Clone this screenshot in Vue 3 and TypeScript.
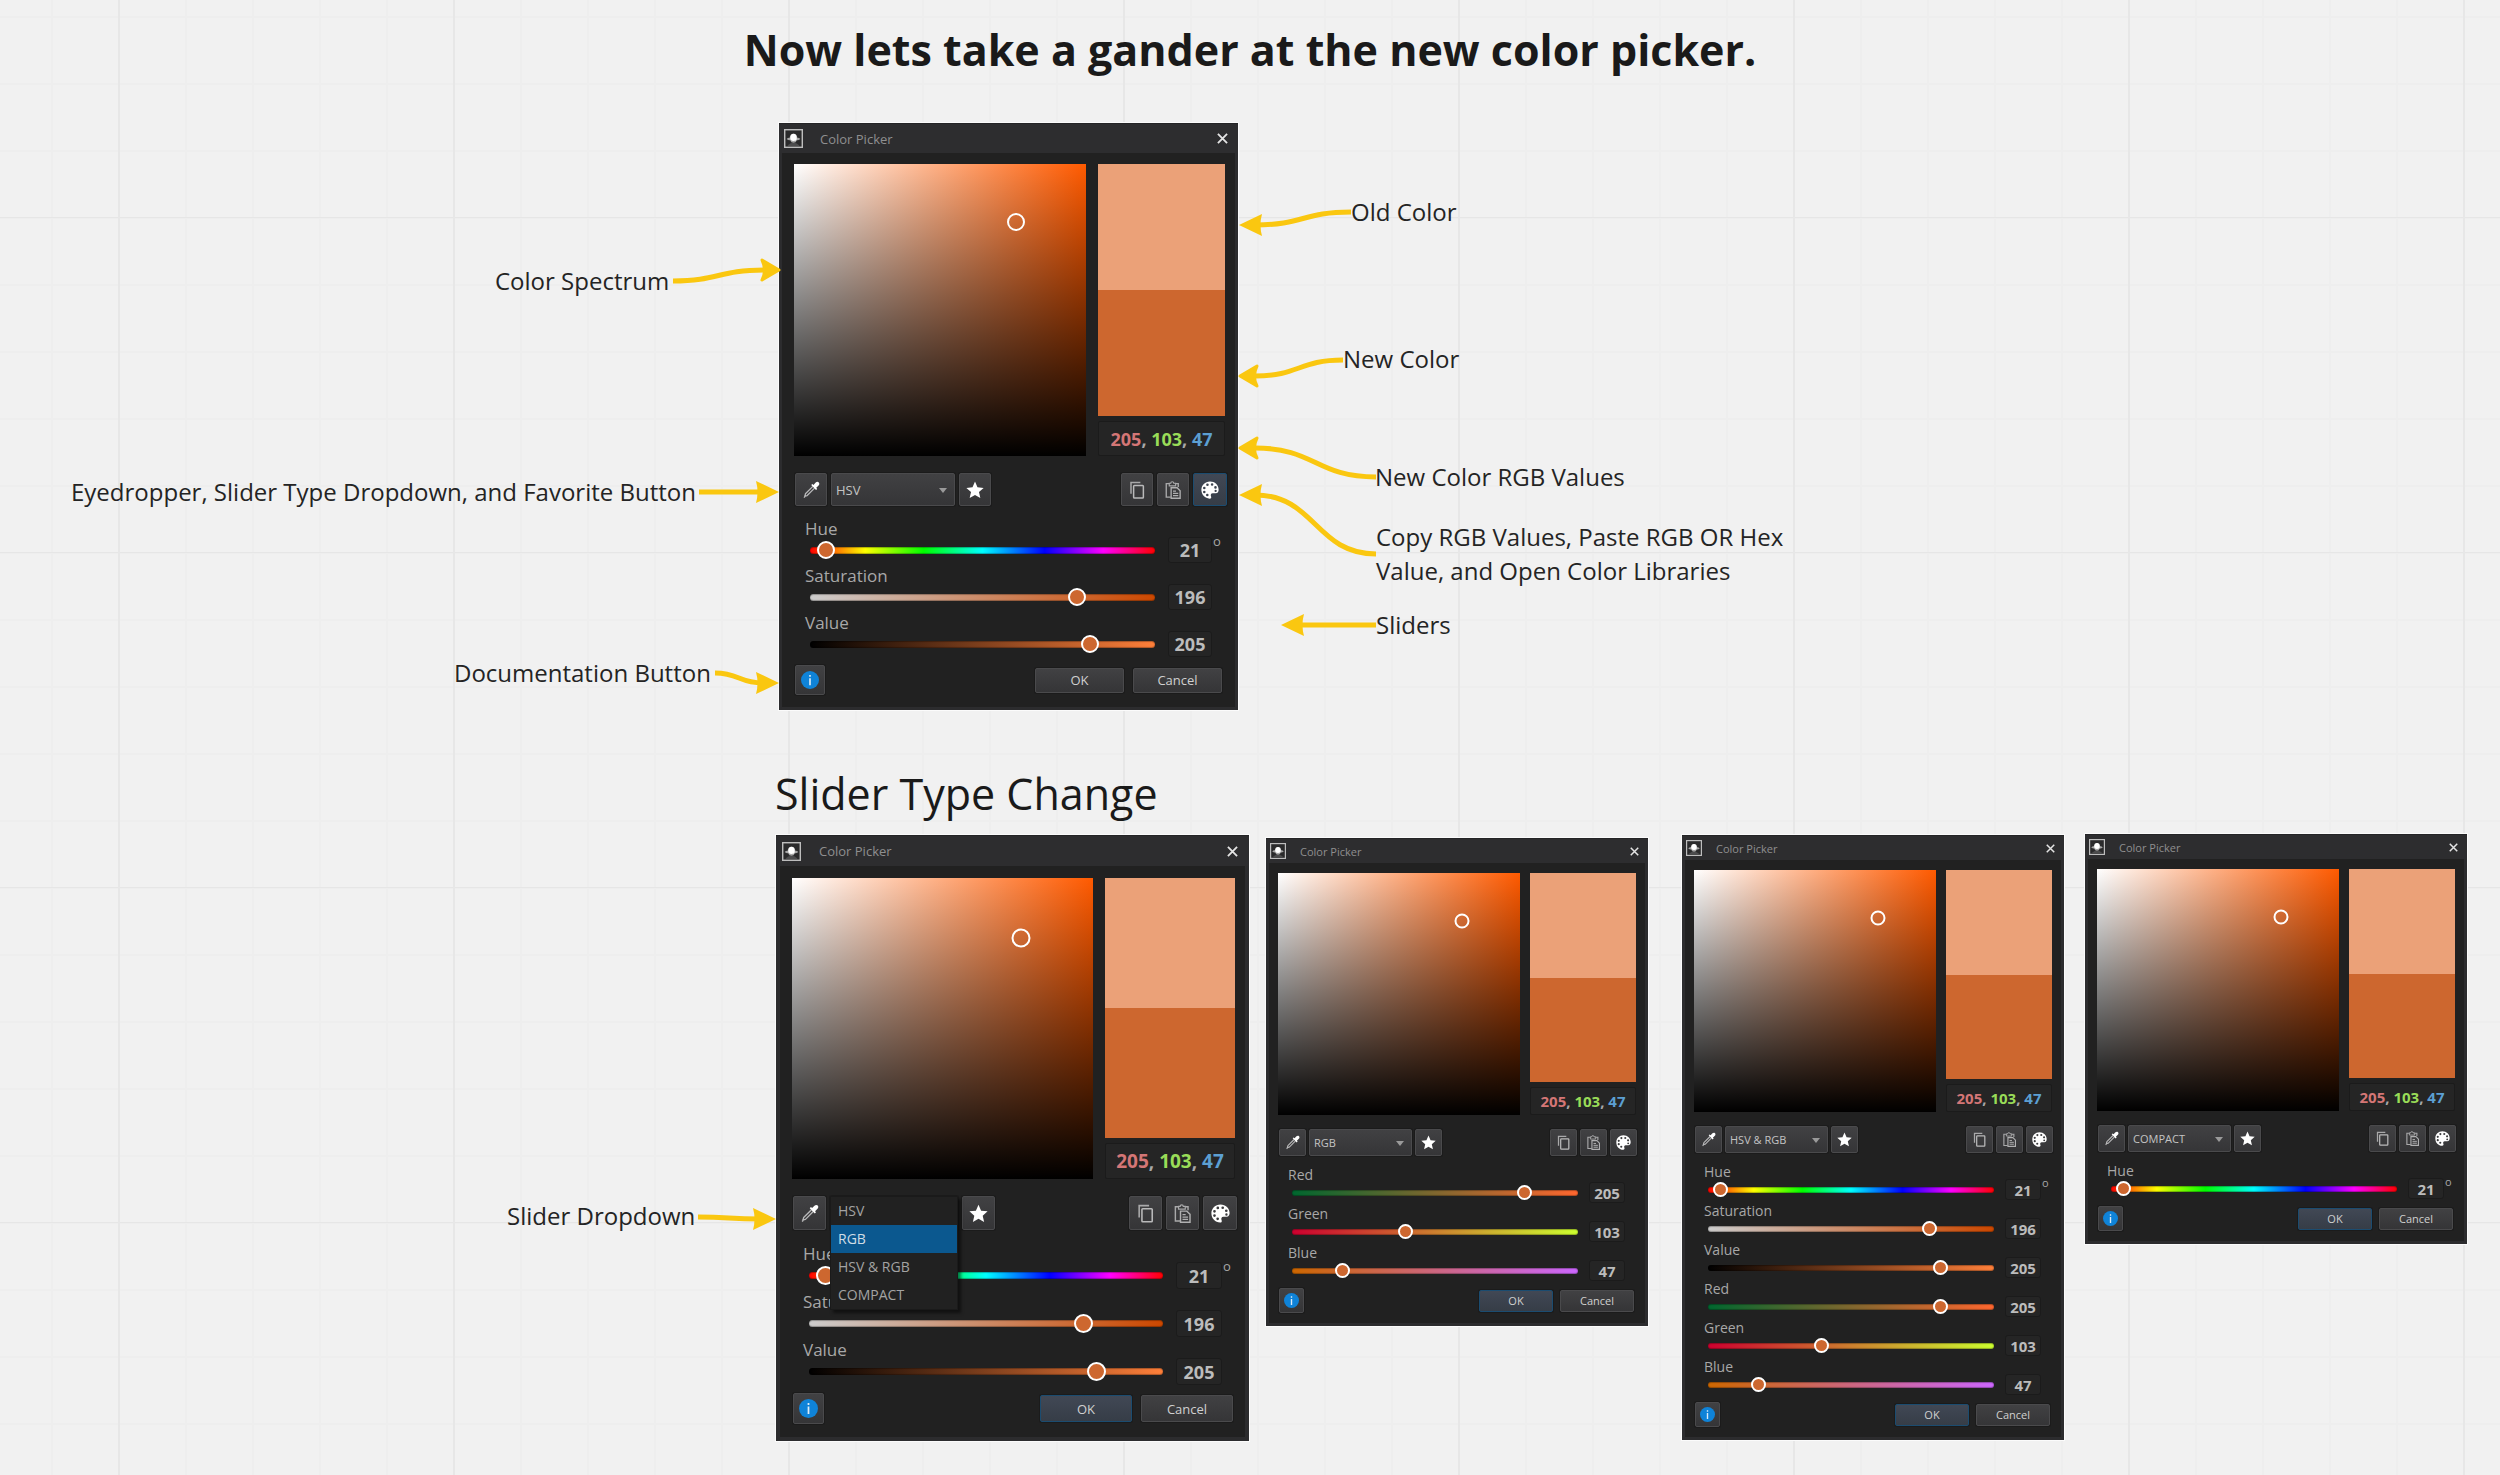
<script setup lang="ts">
type SliderKey = 'hue' | 'saturation' | 'value' | 'red' | 'green' | 'blue'

interface Slider {
  key: SliderKey
  label: string
  amount: number
  position: number
}

interface Picker {
  id: string
  size: 'medium' | 'large' | 'small'
  mode: string
  sliders: Slider[]
  focus: 'palette' | 'ok'
  menuOpen: boolean
}

interface Note {
  id: string
  lines: string[]
}

interface Arrow {
  from: [number, number]
  to: [number, number]
  head: 'sharp' | 'round'
}

const modes: string[] = ['HSV', 'RGB', 'HSV & RGB', 'COMPACT']

// position is the thumb's place along its track, in percent
const hue: Slider = { key: 'hue', label: 'Hue', amount: 21, position: 2 }
const hsv: Slider[] = [
  hue,
  { key: 'saturation', label: 'Saturation', amount: 196, position: 79 },
  { key: 'value', label: 'Value', amount: 205, position: 83 },
]
const rgb: Slider[] = [
  { key: 'red', label: 'Red', amount: 205, position: 83 },
  { key: 'green', label: 'Green', amount: 103, position: 39 },
  { key: 'blue', label: 'Blue', amount: 47, position: 16 },
]

const pickers: Picker[] = [
  { id: 'overview', size: 'medium', mode: 'HSV', sliders: hsv, focus: 'palette', menuOpen: false },
  { id: 'menu', size: 'large', mode: 'HSV', sliders: hsv, focus: 'ok', menuOpen: true },
  { id: 'rgb', size: 'small', mode: 'RGB', sliders: rgb, focus: 'ok', menuOpen: false },
  { id: 'both', size: 'small', mode: 'HSV & RGB', sliders: [...hsv, ...rgb], focus: 'ok', menuOpen: false },
  { id: 'compact', size: 'small', mode: 'COMPACT', sliders: [hue], focus: 'ok', menuOpen: false },
]

const notes: Note[] = [
  { id: 'spectrum', lines: ['Color Spectrum'] },
  { id: 'tools', lines: ['Eyedropper, Slider Type Dropdown, and Favorite Button'] },
  { id: 'docs', lines: ['Documentation Button'] },
  { id: 'old', lines: ['Old Color'] },
  { id: 'new', lines: ['New Color'] },
  { id: 'values', lines: ['New Color RGB Values'] },
  { id: 'clipboard', lines: ['Copy RGB Values, Paste RGB OR Hex', 'Value, and Open Color Libraries'] },
  { id: 'sliders', lines: ['Sliders'] },
  { id: 'dropdown', lines: ['Slider Dropdown'] },
]

const arrows: Arrow[] = [
  { from: [673, 281], to: [780, 270], head: 'round' },
  { from: [699, 492], to: [779, 492], head: 'sharp' },
  { from: [715, 673], to: [779, 683], head: 'sharp' },
  { from: [1351, 212], to: [1239, 225], head: 'sharp' },
  { from: [1343, 360], to: [1239, 376], head: 'round' },
  { from: [1376, 477], to: [1239, 448], head: 'round' },
  { from: [1376, 554], to: [1239, 495], head: 'sharp' },
  { from: [1376, 625], to: [1281, 625], head: 'sharp' },
  { from: [698, 1217], to: [776, 1219], head: 'sharp' },
]

function side(a: Arrow): number {
  return a.to[0] > a.from[0] ? 1 : -1
}

function shaft(a: Arrow): string {
  const s = side(a)
  const end = a.to[0] - s * 16
  const mid = (a.from[0] + end) / 2
  return `M${a.from[0]} ${a.from[1]}C${mid} ${a.from[1]} ${mid} ${a.to[1]} ${end} ${a.to[1]}`
}

function head(a: Arrow): string {
  const [x, y] = a.to
  const s = side(a)
  if (a.head === 'sharp') {
    return `M${x} ${y}L${x - s * 23} ${y - 11}Q${x - s * 20} ${y} ${x - s * 23} ${y + 11}Z`
  }
  return `M${x - s} ${y}L${x - s * 18} ${y - 10}Q${x - s * 13} ${y} ${x - s * 18} ${y + 10}Z`
}
</script>

<template>
  <main class="board">
    <svg class="symbols" width="0" height="0" aria-hidden="true">
      <symbol id="i-dropper" viewBox="0 0 24 24">
        <path d="M14.5 7.2 4.6 17.1 3.6 21.2 2.6 22.2M16.8 9.5 6.900 19.400 2.800 20.400" fill="none" stroke="#b9b9ba" stroke-width="1.700" stroke-linejoin="round" />
        <path d="M12.300 5.300 13.800 3.900 15.300 5.200 18.300 2.100C19.600.8 21.400.9 22.400 1.900S23.400 4.700 22.100 6L19 9l1.200 1.500-1.500 1.500Z" fill="#fff" />
      </symbol>
      <symbol id="i-star" viewBox="0 0 24 24">
        <path d="M12 .8 15.300 8.400 23.500 9.200 17.300 14.700 19.100 22.800 12 18.600 4.900 22.800 6.700 14.700.5 9.200 8.700 8.400Z" fill="#fff" />
      </symbol>
      <symbol id="i-copy" viewBox="0 0 24 24">
        <path d="M4 17V2H16.500" fill="none" stroke="#a9a9aa" stroke-width="2" />
        <rect x="7.500" y="6" width="13" height="16.500" rx="1" fill="none" stroke="#b9b9ba" stroke-width="2" />
      </symbol>
      <symbol id="i-paste" viewBox="0 0 24 24">
        <path d="M9 21.500H3V3.500H19V8" fill="none" stroke="#a9a9aa" stroke-width="1.800" />
        <path d="M7 6.500V3H9a2 2 0 0 1 4 0H15.500V6.500Z" fill="#3a3a3c" stroke="#a9a9aa" stroke-width="1.500" />
        <path d="M9.500 9H17.500L21.500 13V23H9.500Z" fill="none" stroke="#b0b0b1" stroke-width="1.800" />
        <path d="M12 13.500H16M12 16.500H19M12 19.500H19" stroke="#b0b0b1" stroke-width="1.600" />
      </symbol>
      <symbol id="i-palette" viewBox="0 0 24 24">
        <path fill="#fff" fill-rule="evenodd" d="M12 .5C5.400.5.500 5.400.500 11.800.500 18.500 5.500 23.500 11.500 23.500 13.700 23.500 14 21.800 13.400 20.500 12.600 18.700 13 16.200 15.700 16.200H19.500C22.500 16.200 23.500 13.800 23.500 11.500 23.500 5.200 18.500.5 12 .5ZM8.600 3.200a1.700 1.700 0 1 1 0 3.400 1.700 1.700 0 0 1 0-3.400ZM14.800 3a1.700 1.700 0 1 1 0 3.400 1.700 1.700 0 0 1 0-3.400ZM19.300 6.800a1.700 1.700 0 1 1 0 3.400 1.700 1.700 0 0 1 0-3.400ZM4.400 7.600a1.700 1.700 0 1 1 0 3.400 1.700 1.700 0 0 1 0-3.400ZM4.400 12.900a1.700 1.700 0 1 1 0 3.400 1.700 1.700 0 0 1 0-3.400ZM8.400 17a1.700 1.700 0 1 1 0 3.400 1.700 1.700 0 0 1 0-3.400ZM19.500 11.800a1.500 1.500 0 1 1 0 3 1.500 1.500 0 0 1 0-3Z" />
      </symbol>
      <symbol id="i-info" viewBox="0 0 24 24">
        <circle cx="12" cy="12" r="12" fill="#0f83d8" />
        <path d="M10.900 9.500h2.200V19h-2.200ZM10.900 5.200h2.200v2.400h-2.200Z" fill="#dcebf7" />
      </symbol>
      <symbol id="i-app" viewBox="0 0 20 20">
        <rect x=".75" y=".75" width="18.500" height="18.500" fill="#2a2a2b" stroke="#bdbdbd" stroke-width="1.500" />
        <path d="M4 17Q10 12 16 17V18H4Z" fill="#4c4c4d" />
        <path d="M2.800 10.500Q4.500 8.800 6 9.200 6.300 5 10 5T14 9.200Q15.500 8.800 17.200 10.500 15.500 12 13.500 11.800 12.600 14.600 10 14.600T6.500 11.800Q4.500 12 2.800 10.500Z" fill="#a6a6a6" />
        <path d="M6.600 9.500C6.600 6.500 8 5 10 5S13.400 6.500 13.400 9.500 12 12.500 10 12.500 6.600 12 6.600 9.500Z" fill="#fff" />
      </symbol>
      <symbol id="i-close" viewBox="0 0 12 12">
        <path d="M1 1 11 11M11 1 1 11" stroke="#e4e4e4" stroke-width="2" />
      </symbol>
    </svg>

    <h1 class="headline">Now lets take a gander at the new color picker.</h1>
    <h2 class="subhead">Slider Type Change</h2>

    <section
      v-for="p in pickers"
      :key="p.id"
      class="picker"
      :class="[p.size, 'at-' + p.id]"
      aria-label="Color Picker"
    >
      <header class="titlebar">
        <svg class="app"><use href="#i-app" /></svg>
        <span class="name">Color Picker</span>
        <button class="close" type="button" aria-label="Close">
          <svg><use href="#i-close" /></svg>
        </button>
      </header>

      <div class="colors">
        <div class="spectrum"><span class="ring"></span></div>
        <div class="side">
          <div class="old"></div>
          <div class="new"></div>
          <output class="triplet"><span class="r">205</span>, <span class="g">103</span>, <span class="b">47</span></output>
        </div>
      </div>

      <div class="toolbar">
        <button class="tool" type="button" aria-label="Eyedropper">
          <svg><use href="#i-dropper" /></svg>
        </button>
        <div class="mode">
          <select :value="p.mode" aria-label="Slider type">
            <option v-for="m in modes" :key="m" :value="m">{{ m }}</option>
          </select>
          <ul v-if="p.menuOpen" class="menu" role="listbox" aria-label="Slider types">
            <li v-for="m in modes" :key="m" role="option" :aria-selected="m === 'RGB'" :class="{ active: m === 'RGB' }">{{ m }}</li>
          </ul>
        </div>
        <button class="tool favorite" type="button" aria-label="Favorite">
          <svg><use href="#i-star" /></svg>
        </button>
        <button class="tool" type="button" aria-label="Copy RGB values">
          <svg><use href="#i-copy" /></svg>
        </button>
        <button class="tool" type="button" aria-label="Paste color">
          <svg><use href="#i-paste" /></svg>
        </button>
        <button class="tool palette" :class="{ focused: p.focus === 'palette' }" type="button" aria-label="Color libraries">
          <svg><use href="#i-palette" /></svg>
        </button>
      </div>

      <div class="sliders">
        <div v-for="s in p.sliders" :key="s.key" class="row">
          <div class="track">
            <label :for="p.id + '-' + s.key">{{ s.label }}</label>
            <input :id="p.id + '-' + s.key" type="range" min="0" max="100" :value="s.position" :class="s.key" />
          </div>
          <div class="amount">
            <input type="text" :value="s.amount" :aria-label="s.label + ' amount'" />
            <span v-if="s.key === 'hue'" class="degree">o</span>
          </div>
        </div>
      </div>

      <footer class="actions">
        <button class="tool info" type="button" aria-label="Documentation">
          <svg><use href="#i-info" /></svg>
        </button>
        <button class="action" :class="{ focused: p.focus === 'ok' }" type="button">OK</button>
        <button class="action" type="button">Cancel</button>
      </footer>
    </section>

    <p v-for="n in notes" :key="n.id" class="note" :class="'note-' + n.id">
      <span v-for="line in n.lines" :key="line">{{ line }}</span>
    </p>

    <svg class="arrows" aria-hidden="true">
      <g v-for="(a, i) in arrows" :key="i">
        <path class="shaft" :d="shaft(a)" />
        <path class="head" :class="a.head" :d="head(a)" />
      </g>
    </svg>
  </main>
</template>

<style>
body {
  margin: 0;
  background: #f1f1f1;
}
</style>

<style scoped>
* {
  box-sizing: border-box;
}

.board {
  position: relative;
  min-height: 100vh;
  overflow: hidden;
  font-family: "Open Sans", "Noto Sans", sans-serif;
  color: #1a1a1a;
  background-color: #f1f1f1;
  background-image:
    linear-gradient(to right, #e7e7e7 2px, transparent 2px),
    linear-gradient(to bottom, #e6e6e6 1px, transparent 1px),
    linear-gradient(to right, #eeeeee 2px, transparent 2px),
    linear-gradient(to bottom, #eeeeee 2px, transparent 2px);
  background-size: 335px 335px, 335px 335px, 67px 67px, 67px 67px;
  background-position: 118px 0, 0 217px, 51px 0, 0 16px;
}

.symbols {
  position: absolute;
}

.headline {
  margin: 0;
  padding-top: 20px;
  font-size: 43px;
  line-height: 60px;
  font-weight: 700;
  text-align: center;
}

.subhead {
  position: absolute;
  left: 775px;
  top: 764px;
  margin: 0;
  font-size: 43px;
  line-height: 60px;
  font-weight: 400;
  white-space: nowrap;
}

/* notes and arrows on the canvas */
.note {
  position: absolute;
  margin: 0;
  font-size: 24px;
  line-height: 34px;
  color: #242424;
  white-space: nowrap;
}
.note span { display: block; }
.note-spectrum { left: 495px; top: 264px; }
.note-tools { left: 71px; top: 475px; }
.note-docs { left: 454px; top: 656px; }
.note-old { left: 1351px; top: 195px; }
.note-new { left: 1343px; top: 342px; }
.note-values { left: 1375px; top: 460px; }
.note-clipboard { left: 1376px; top: 520px; }
.note-sliders { left: 1376px; top: 608px; }
.note-dropdown { left: 507px; top: 1199px; }

.arrows {
  position: absolute;
  left: 0;
  top: 0;
  width: 100%;
  height: 100%;
  pointer-events: none;
}
.shaft {
  fill: none;
  stroke: #fac710;
  stroke-width: 5px;
}
.head { fill: #fac710; }
.head.round {
  stroke: #fac710;
  stroke-width: 3px;
  stroke-linejoin: round;
}

/* picker sizes */
.medium {
  --width: 459px; --title: 30px; --title-gap: 11px; --app: 19px; --app-left: 5px; --name-gap: 17px; --close: 11px; --close-right: 10px;
  --left: 15px; --right: 13px; --square: 292px; --gap: 12px; --box: 35px; --ring: 18px;
  --tools-gap: 17px; --tools-left: 16px; --tools-right: 11px; --tool-w: 32px; --tool-h: 33px; --palette-w: 34px; --tool-gap: 4px; --mode-w: 124px; --icon: 18px;
  --rows-gap: 11px; --rows-left: 26px; --rows-right: 26px; --row: 47px; --label: 24px; --indent: 5px; --amount-gap: 13px; --amount-w: 44px; --amount-h: 26px;
  --foot-gap: 7px; --info: 30px; --action-w: 89px; --action-h: 25px; --action-gap: 9px; --foot-right: 16px; --bottom: 15px; --edge: 3px;
  --small-text: 13px; --menu-text: 13px; --label-text: 17px; --bold-text: 18px; --triplet-text: 18px; --bar: 7px;
}
.large {
  --width: 473px; --title: 31px; --title-gap: 12px; --app: 19px; --app-left: 6px; --name-gap: 18px; --close: 11px; --close-right: 11px;
  --left: 16px; --right: 14px; --square: 301px; --gap: 12px; --box: 36px; --ring: 19px;
  --tools-gap: 17px; --tools-left: 17px; --tools-right: 12px; --tool-w: 33px; --tool-h: 34px; --palette-w: 34px; --tool-gap: 4px; --mode-w: 128px; --icon: 19px;
  --rows-gap: 12px; --rows-left: 27px; --rows-right: 27px; --row: 48px; --label: 24px; --indent: 6px; --amount-gap: 13px; --amount-w: 46px; --amount-h: 27px;
  --foot-gap: 7px; --info: 31px; --action-w: 92px; --action-h: 27px; --action-gap: 9px; --foot-right: 16px; --bottom: 17px; --edge: 4px;
  --small-text: 13px; --menu-text: 14px; --label-text: 17px; --bold-text: 18px; --triplet-text: 19px; --bar: 7px;
}
.small {
  --width: 382px; --title: 25px; --title-gap: 10px; --app: 16px; --app-left: 4px; --name-gap: 14px; --close: 9px; --close-right: 9px;
  --left: 12px; --right: 12px; --square: 242px; --gap: 10px; --box: 28px; --ring: 15px;
  --tools-gap: 14px; --tools-left: 13px; --tools-right: 11px; --tool-w: 27px; --tool-h: 27px; --palette-w: 27px; --tool-gap: 3px; --mode-w: 103px; --icon: 15px;
  --rows-gap: 9px; --rows-left: 22px; --rows-right: 23px; --row: 39px; --label: 20px; --indent: 4px; --amount-gap: 11px; --amount-w: 36px; --amount-h: 21px;
  --foot-gap: 6px; --info: 25px; --action-w: 74px; --action-h: 22px; --action-gap: 7px; --foot-right: 14px; --bottom: 13px; --edge: 3px;
  --small-text: 11px; --menu-text: 11px; --label-text: 14px; --bold-text: 15px; --triplet-text: 15px; --bar: 6px;
}

.at-overview { left: 779px; top: 123px; }
.at-menu { left: 776px; top: 835px; }
.at-rgb { left: 1266px; top: 838px; }
.at-both { left: 1682px; top: 835px; }
.at-compact { left: 2085px; top: 834px; }

.picker {
  position: absolute;
  width: var(--width);
  padding-bottom: var(--bottom);
  background: #212121;
  box-shadow: inset 0 0 0 var(--edge) #2c2c2e, 0 0 0 1px #fbfbfb;
  color: #a8a8a8;
}

.picker svg { display: block; }

.titlebar {
  display: flex;
  align-items: center;
  height: var(--title);
  padding: 0 var(--close-right) 0 var(--app-left);
  background: #2d2d2f;
  border-top: 1px solid #242426;
}
.app {
  width: var(--app);
  height: var(--app);
}
.name {
  flex: 1;
  margin-left: var(--name-gap);
  font-size: var(--small-text);
  color: #8f8f8f;
}
.close {
  padding: 0;
  border: 0;
  background: none;
}
.close svg {
  width: var(--close);
  height: var(--close);
}

.colors {
  display: flex;
  gap: var(--gap);
  height: var(--square);
  margin: var(--title-gap) var(--right) 0 var(--left);
}
.spectrum {
  position: relative;
  width: var(--square);
  background:
    linear-gradient(to top, #000, transparent),
    linear-gradient(to right, #fff, #ff5a00);
}
.ring {
  position: absolute;
  left: 76%;
  top: 20%;
  width: var(--ring);
  height: var(--ring);
  transform: translate(-50%, -50%);
  border: 2px solid #fff;
  border-radius: 50%;
}
.side {
  flex: 1;
  display: flex;
  flex-direction: column;
}
.old { flex: 1; background: #eba178; }
.new { flex: 1; background: #cd672f; }
.triplet {
  height: var(--box);
  margin-top: 5px;
  border: 1px solid #1b1b1b;
  border-radius: 2px;
  background: #252525;
  display: flex;
  align-items: center;
  justify-content: center;
  font-size: var(--triplet-text);
  font-weight: 700;
  white-space: pre;
}
.r { color: #d47676; }
.g { color: #99dc58; }
.b { color: #5c9fd2; }

.toolbar {
  display: flex;
  gap: var(--tool-gap);
  margin-top: var(--tools-gap);
  padding: 0 var(--tools-right) 0 var(--tools-left);
}
.tool,
.action,
.mode select {
  display: flex;
  align-items: center;
  justify-content: center;
  margin: 0;
  padding: 0;
  border: 1px solid #4a4a4c;
  border-radius: 2px;
  background: linear-gradient(#414143, #353537);
  box-shadow: 0 0 0 1px #1b1b1b;
  font-family: inherit;
  font-size: var(--small-text);
  color: #d0d0d0;
}
.tool {
  width: var(--tool-w);
  height: var(--tool-h);
}
.tool svg {
  width: var(--icon);
  height: var(--icon);
}
.tool.palette { width: var(--palette-w); }
.tool.favorite { margin-right: auto; }
.tool.focused,
.action.focused {
  border-color: #1b4c70;
  background: linear-gradient(#414855, #363d47);
}

.mode {
  position: relative;
  width: var(--mode-w);
}
.mode::after {
  content: "";
  position: absolute;
  right: 8px;
  top: 50%;
  margin-top: -2px;
  border: 4px solid transparent;
  border-top: 5px solid #9a9a9a;
  border-bottom: 0;
  pointer-events: none;
}
.mode select {
  width: 100%;
  height: var(--tool-h);
  padding-left: 4px;
  appearance: none;
  color: #c4c4c4;
}
.menu {
  position: absolute;
  z-index: 2;
  left: 0;
  top: 0;
  width: 100%;
  margin: 0;
  padding: 0;
  border: 1px solid #1a1a1a;
  background: #212121;
  box-shadow: 3px 3px 3px #00000080;
  list-style: none;
  font-size: var(--menu-text);
  line-height: 28px;
  color: #a3a3a3;
}
.menu li { padding-left: 7px; }
.menu .active {
  background: #0b588f;
  color: #d0dde6;
}

.sliders {
  margin: var(--rows-gap) var(--rows-right) 0 var(--rows-left);
}
.row {
  display: flex;
  gap: var(--amount-gap);
  height: var(--row);
}
.track {
  flex: 1;
  display: flex;
  flex-direction: column;
}
.track label {
  height: var(--label);
  font-size: var(--label-text);
  line-height: var(--label);
}
.track input {
  height: var(--ring);
  margin: 0 0 0 var(--indent);
  appearance: none;
  background: none;
}
.track input::-webkit-slider-runnable-track {
  height: var(--bar);
  border-radius: 4px;
  background: var(--ramp);
  box-shadow: inset 0 1px 1px #0000004d, inset 0 -1px 1px #0000004d;
}
.track input::-webkit-slider-thumb {
  appearance: none;
  width: var(--ring);
  height: var(--ring);
  margin-top: calc((var(--bar) - var(--ring)) / 2);
  border: 2px solid #fff;
  border-radius: 50%;
  background: #cd672f;
}
.hue { --ramp: linear-gradient(to right, #f00, #ff0 16%, #0f0 33%, #0ff 50%, #00f 68%, #f0f 85%, #f00); }
.saturation { --ramp: linear-gradient(to right, #cdcdcd, #cd4800); }
.value { --ramp: linear-gradient(to right, #000, #ff803a); }
.red { --ramp: linear-gradient(to right, #00672f, #ff672f); }
.green { --ramp: linear-gradient(to right, #cd002f, #cdff2f); }
.blue { --ramp: linear-gradient(to right, #cd6700, #cd67ff); }

.amount {
  position: relative;
  align-self: flex-end;
  width: var(--amount-w);
  height: var(--amount-h);
  margin-bottom: 1px;
}
.amount input {
  display: block;
  width: 100%;
  height: 100%;
  padding: 0;
  border: 1px solid #1b1b1b;
  border-radius: 3px;
  background: #252525;
  font-family: inherit;
  font-size: var(--bold-text);
  font-weight: 700;
  text-align: center;
  color: #bcbcbc;
}
.degree {
  position: absolute;
  left: 100%;
  top: -4px;
  margin-left: 1px;
  font-size: var(--small-text);
  line-height: 16px;
}

.actions {
  display: flex;
  align-items: center;
  gap: var(--action-gap);
  margin-top: var(--foot-gap);
  padding: 0 var(--foot-right) 0 var(--tools-left);
}
.tool.info {
  width: var(--info);
  height: var(--info);
  margin-right: auto;
}
.action {
  width: var(--action-w);
  height: var(--action-h);
}
</style>
